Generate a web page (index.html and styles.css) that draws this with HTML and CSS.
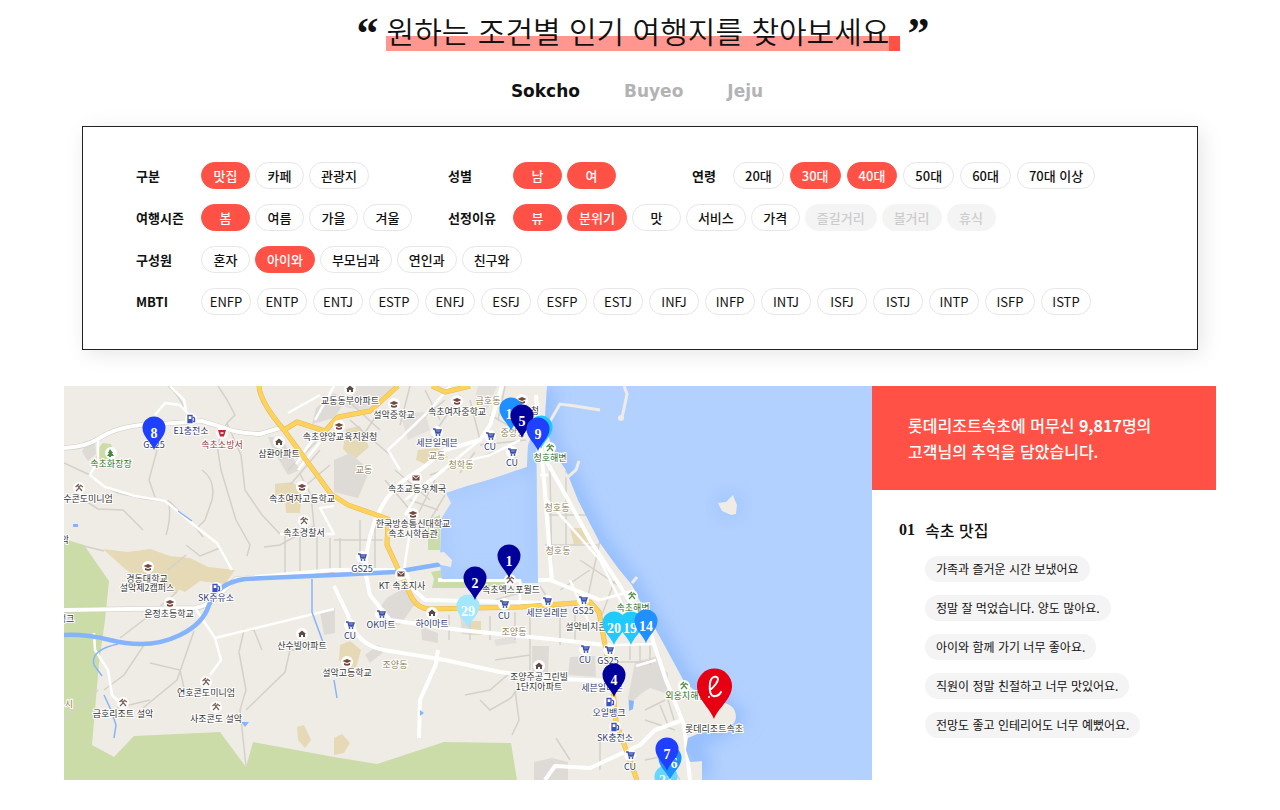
FILE: index.html
```html
<!DOCTYPE html>
<html lang="ko">
<head>
<meta charset="utf-8">
<meta name="viewport" content="width=device-width, initial-scale=1">
<title>조건별 인기 여행지</title>
<link rel="stylesheet" href="styles.css">
</head>
<body>
<main class="page">
  <header class="heading">
    <span class="quote" aria-hidden="true">“</span>
    <h1 class="title">원하는 조건별 인기 여행지를 찾아보세요</h1>
    <span class="quote" aria-hidden="true">”</span>
  </header>

  <nav class="tabs" aria-label="지역">
    <button class="tab active" type="button">Sokcho</button>
    <button class="tab" type="button">Buyeo</button>
    <button class="tab" type="button">Jeju</button>
  </nav>

  <section class="filters" aria-label="조건">
    <div class="group" role="group" aria-labelledby="f1">
      <span class="label" id="f1">구분</span>
      <div class="chips">
        <button type="button" class="chip on">맛집</button>
        <button type="button" class="chip">카페</button>
        <button type="button" class="chip">관광지</button>
      </div>
    </div>
    <div class="group" role="group" aria-labelledby="f2">
      <span class="label" id="f2">성별</span>
      <div class="chips">
        <button type="button" class="chip on">남</button>
        <button type="button" class="chip on">여</button>
      </div>
    </div>
    <div class="group compact" role="group" aria-labelledby="f3">
      <span class="label" id="f3">연령</span>
      <div class="chips">
        <button type="button" class="chip">20대</button>
        <button type="button" class="chip on">30대</button>
        <button type="button" class="chip on">40대</button>
        <button type="button" class="chip">50대</button>
        <button type="button" class="chip">60대</button>
        <button type="button" class="chip">70대 이상</button>
      </div>
    </div>
    <div class="group" role="group" aria-labelledby="f4">
      <span class="label" id="f4">여행시즌</span>
      <div class="chips">
        <button type="button" class="chip on">봄</button>
        <button type="button" class="chip">여름</button>
        <button type="button" class="chip">가을</button>
        <button type="button" class="chip">겨울</button>
      </div>
    </div>
    <div class="group wide" role="group" aria-labelledby="f5">
      <span class="label" id="f5">선정이유</span>
      <div class="chips">
        <button type="button" class="chip on">뷰</button>
        <button type="button" class="chip on">분위기</button>
        <button type="button" class="chip">맛</button>
        <button type="button" class="chip">서비스</button>
        <button type="button" class="chip">가격</button>
        <button type="button" class="chip" disabled>즐길거리</button>
        <button type="button" class="chip" disabled>볼거리</button>
        <button type="button" class="chip" disabled>휴식</button>
      </div>
    </div>
    <div class="group full" role="group" aria-labelledby="f6">
      <span class="label" id="f6">구성원</span>
      <div class="chips">
        <button type="button" class="chip">혼자</button>
        <button type="button" class="chip on">아이와</button>
        <button type="button" class="chip">부모님과</button>
        <button type="button" class="chip">연인과</button>
        <button type="button" class="chip">친구와</button>
      </div>
    </div>
    <div class="group full mbti" role="group" aria-labelledby="f7">
      <span class="label" id="f7">MBTI</span>
      <div class="chips">
        <button type="button" class="chip">ENFP</button>
        <button type="button" class="chip">ENTP</button>
        <button type="button" class="chip">ENTJ</button>
        <button type="button" class="chip">ESTP</button>
        <button type="button" class="chip">ENFJ</button>
        <button type="button" class="chip">ESFJ</button>
        <button type="button" class="chip">ESFP</button>
        <button type="button" class="chip">ESTJ</button>
        <button type="button" class="chip">INFJ</button>
        <button type="button" class="chip">INFP</button>
        <button type="button" class="chip">INTJ</button>
        <button type="button" class="chip">ISFJ</button>
        <button type="button" class="chip">ISTJ</button>
        <button type="button" class="chip">INTP</button>
        <button type="button" class="chip">ISFP</button>
        <button type="button" class="chip">ISTP</button>
      </div>
    </div>
  </section>

  <section class="result">
    <svg class="map" viewBox="64 386 808 394" preserveAspectRatio="xMidYMid slice" role="img" aria-label="속초 지도">
      <defs>
        <filter id="soft" x="-20%" y="-20%" width="140%" height="140%"><feGaussianBlur stdDeviation="9"/></filter>
        <path id="pin" d="M0 0C-2 -7-11.500-13-11.500-22A11.500 11.500 0 1 1 11.500-22C11.500-13 2-7 0 0Z"/>
        <g id="cart"><circle r="6" fill="#fff"/><path d="M-4-3h2l1 4h4l1-3h-5.500M-1 0h4" fill="none" stroke="#3c50a8" stroke-width="1.400"/><circle cx="-.5" cy="3" r=".9" fill="#3c50a8"/><circle cx="2.500" cy="3" r=".9" fill="#3c50a8"/></g>
        <g id="school"><circle r="6" fill="#fff"/><path d="M-4.500-1 0-3l4.500 2L0 1ZM-3 1v2q3 1.500 6 0V1L0 2Z" fill="#73483f"/></g>
        <g id="fuel"><circle r="6" fill="#fff"/><path d="M-3-3.500h4v7h-4ZM2-2l1.500 1v3.500H2" fill="none" stroke="#3c50c0" stroke-width="1.300"/><path d="M-3 0h4v3.500h-4Z" fill="#3c50c0"/></g>
        <g id="home"><circle r="6" fill="#fff"/><path d="M-4 0 0-3.500 4 0H3v3H1V1H-1v2H-3V0Z" fill="#5d4a42"/></g>
        <g id="resort"><circle r="6" fill="#fff"/><path d="M-3.500-1 0-4M-2-3 3 3M0 0-3 3M1-3l3 2M2-3 0-1" fill="none" stroke="#7a6156" stroke-width="1.200"/></g>
        <g id="beach"><circle r="6" fill="#fff"/><path d="M-3.500-1 0-4M-2-3 3 3M0 0-3 3M1-3l3 2M2-3 0-1" fill="none" stroke="#579246" stroke-width="1.200"/></g>
        <g id="tree"><circle r="6" fill="#fff"/><path d="M-1-4 2 0H1l2 3H0v1H-2V3H-4l2-3H-3Z" fill="#3f8f36"/></g>
        <g id="mail"><circle r="6" fill="#fff"/><path d="M-3.500-2.500h7v5h-7Z" fill="#73483f"/><path d="M-3-2 0 .5 3-2" fill="none" stroke="#fff"/></g>
        <g id="siren"><circle r="6" fill="#fff"/><path d="M-4-3 4-3 2 3.500H-2Z" fill="#c8232c"/><path d="M-1.500 0h3" stroke="#fff" stroke-width="1.500"/></g>
      </defs>

      <rect x="64" y="386" width="808" height="394" fill="#efece6"/>

      <g fill="#cbdca9">
        <path d="M64 539 84 545 109 581 105 620 99 663 92 745 114 757 134 736 220 732 246 767 253 742 334 757 377 764 444 742 511 743 517 780H64Z"/>
        <path d="M98 448 103 443 111 444 115 455 103 463 96 458ZM428 520 440 515 440 550 428 550ZM434 579 505 579 505 588 432 588ZM431 572 442 570 442 579 434 579Z"/>
      </g>
      <g fill="#e6d9b6">
        <path d="M103 549 128 552 150 549 170 556 190 558 208 567 235 570 225 584 200 581 185 592 165 583 140 580 124 568Z"/>
        <path d="M275 484 292 482 302 490 300 513 286 513 285 500 275 496ZM346 429 360 426 369 447 354 460 343 449ZM418 450 438 448 448 457 425 464 416 460ZM340 645 350 641 361 650 356 668 345 668 339 660ZM471 621 481 621 481 635 471 635ZM570 528 586 528 590 542 574 545ZM334 738 342 734 350 743 344 753 334 755ZM297 727 304 725 311 740 305 748 298 740ZM158 578 184 585 175 594Z"/>
      </g>
      <g fill="#dedbd7">
        <path d="M316 408 334 393 346 400 334 418 312 424ZM334 460 350 453 370 470 358 498 334 492ZM375 613 388 597 404 588 415 604 400 625 386 622ZM365 655 378 645 386 650 370 663ZM421 627 438 633 438 643 422 640ZM532 646 549 646 548 677 532 677ZM570 657 595 656 596 677 568 675ZM634 673 654 661 668 673 668 694 650 688 636 697ZM84 447 95 441 96 454 88 461 82 452ZM268 437 281 437 300 470 288 475 273 450ZM320 612 335 608 335 633 324 635ZM460 615 471 613 471 635 462 634ZM534 762 552 758 568 762 568 780 534 780ZM635 662 661 655 660 676 628 706 628 698Z"/>
        <path d="M350 386 395 386 365 411 345 407ZM400 414 425 412 430 430 408 440ZM478 386 497 386 487 410 474 402ZM494 640 513 636 517 643 496 646Z" opacity=".7"/>
      </g>

      <g fill="none" stroke="#d5d0ca" stroke-width="1.500">
        <path d="M168 386Q180 396 184 409M218 386Q228 400 235 415L227 423 217 445 221 470 236 520 250 545 247 556M227 423 241 455 245 490 262 515 280 534M202 470Q216 480 212 500L205 520 198 527M157 450 149 480 155 497M64 463 90 475 105 487 118 493 145 499 170 502 184 516 194 525 203 537M76 495 98 509 123 510 143 530M168 500Q172 515 166 535M186 545 200 556 220 548M300 474 311 495 314 526 280 545 264 547M168 570 186 555M84 546 104 551M177 592 150 615 137 625 120 638M144 645 124 675 104 690M194 631 177 680 143 708M150 663 180 670 185 692M239 652 246 690 240 710 246 766M239 652 244 630 254 630 262 650M246 710 285 672 290 650 300 650M465 695 490 690 511 672M480 700 490 710 511 698 520 685M515 690 519 720 512 735M64 720 98 690M117 708 150 700"/>
        <path d="M285 535V573M300 530V572M317 535V571M330 538V570M340 538V570M360 520V570M375 520V572M334 540 383 540M345 398 380 430M350 420 390 455M380 410 360 440M410 386 400 425M425 390 440 420M445 400 400 437M460 395 430 440M470 400 480 440M430 475 500 450M410 500 438 510M435 480 415 520M445 495 424 530M395 470 430 500M385 480 410 510M480 445 526 440M490 415 525 435M505 386 498 420M515 450 516 468M460 473 475 452M280 460 297 448M290 485 320 450M288 470 316 442M305 486 330 465"/>
        <path d="M449 615V640M470 613V640M490 616V640M515 612V640M530 608V645M560 606V645M575 605V640M495 660 530 655M530 645V670M495 600 530 590M560 590 590 570M540 586 555 610M550 470 552 580M566 470 566 550M545 515 590 515M545 545 598 545M580 560 625 590M600 540 585 610M615 580 600 620M630 645V660M640 645V662M650 645V665M608 662 646 662M645 710 665 700M660 705 668 725M668 700 674 720M645 720 675 730M556 738 570 760M600 740 600 770M645 760 665 756 680 780"/>
      </g>
      <path d="M64 448Q85 447 98 439 120 424 160 424L202 421 225 428Q235 433 260 434L280 428M64 610 195 608Q210 606 222 592L236 579 334 573" fill="none" stroke="#d0cbc3" stroke-width="5"/>
      <g fill="none" stroke="#fff" stroke-linejoin="round">
        <g stroke-width="4">
          <path d="M64 448Q85 447 98 439 120 424 160 424L202 421 225 428Q235 433 260 434L280 428M64 610 195 608Q210 606 222 592L236 579 334 570 395 570"/>
          <path d="M502 386 490 425 480 440 445 450 420 470Q370 495 365 570L370 595 390 620 460 630 560 640 615 646M334 586 348 615Q356 645 384 650L445 660 500 672 560 679 612 681"/>
          <path d="M536 395 544 480 552 582M540 450 560 485 590 540 650 632 666 680 684 725 690 780M438 580H550L575 590 600 600"/>
          <path d="M438 650 436 664 420 700 419 738M545 780 555 766 590 768 640 745 655 730 683 720M405 570 412 588 425 600 550 603"/>
        </g>
        <g stroke-width="2.500">
          <path d="M98 440 98 460 90 475 105 487 135 496 165 501 180 513 200 530 217 543 232 570M155 415 165 403 180 405 195 421M170 386 184 400 186 410M195 608 215 638 221 660 210 675M215 638 334 609M94 633 95 650 108 670 112 695 120 703M280 534H334L320 508 334 506M288 413 320 395M315 436 296 464M320 442 298 470M334 386 315 420M520 440 490 455 450 465 420 490 405 515M480 440 405 500M400 470 388 450 430 410 450 386M540 475 548 475M547 500 600 560 625 610M600 600 635 590M615 645 655 644M636 666 656 660M605 640 608 660M520 580V605M570 580 590 625M412 520 407 550 404 570"/>
        </g>
      </g>

      <g fill="none" stroke-linejoin="round">
        <path d="M259 386Q260 402 284 430L331 494 348 505 388 519 387 545 400 573 412 598Q418 609 430 609L520 607 590 602 599 612 606 650 613 690 616 722 637 780M284 430 297 422 325 431 338 417 370 411 398 386M432 386 445 392 470 386" stroke="#dfb75e" stroke-width="5"/>
        <path d="M259 386Q260 402 284 430L331 494 348 505 388 519 387 545 400 573 412 598Q418 609 430 609L520 607 590 602 599 612 606 650 613 690 616 722 637 780M284 430 297 422 325 431 338 417 370 411 398 386M432 386 445 392 470 386" stroke="#ffd35b" stroke-width="4"/>
      </g>

      <g fill="none" stroke="#86b4fb">
        <path d="M64 635Q85 634 110 640 150 650 180 635 203 624 209 605 217 583 245 579L334 575 395 572 442 564" stroke-width="4.500"/>
        <path d="M118 644Q90 650 94 665L102 676M104 695 111 710 116 725 114 738M178 511 192 521M312 579V612L324 645M334 680 337 698" stroke-width="1.500"/>
      </g>
      <path d="M73 524h5v3h-5ZM241 722h8l-4 5ZM420 710l4 3-4 3ZM629 700l5 1-1 8-4 2Z" fill="#86b4fb"/>

      <clipPath id="sea"><path d="M547 386 545 418 552 450 566 470 578 500 600 543 618 568 632 585 642 605 660 637 685 683 697 692 720 702Q736 704 736 717 735 728 720 731L700 733 688 738 686 750 690 762 702 761 702 780H872V386ZM446 493 467 486 488 480 527 467 528 445 536 425 538 583 522 583 521 579H442L440 564 441 519 451 503Z"/></clipPath>
      <g clip-path="url(#sea)">
        <rect x="400" y="386" width="472" height="394" fill="#b3d1ff"/>
        <path d="M547 386 545 418 552 450 566 470 578 500 600 543 618 568 632 585 642 605 660 637 685 683 720 702 736 717 720 731 688 738 686 750 702 761 702 780" fill="none" stroke="#8fbafc" stroke-width="16" filter="url(#soft)"/>
        <path d="M446 493 527 467 528 445M537 425V583M521 579H442L440 519" fill="none" stroke="#9cc2fc" stroke-width="8" filter="url(#soft)"/>
        <circle cx="729" cy="506" r="16" fill="#a3c7fd" filter="url(#soft)"/>
      </g>
      <g fill="#efece6">
        <path d="M718 503 726 502 730 498 733 495 734 498 737 505 736 514 731 515 722 511Z"/>
        <path d="M435 553 444 552 452 560 451 567 441 565 435 560Z"/>
      </g>
      <path d="M545 430 560 404 575 406 600 410M550 460 568 477 576 470 579 461M624 386 627 394 622 418M632 583 637 577" fill="none" stroke="#efece6" stroke-width="3"/>
      <circle cx="621" cy="418" r="3" fill="#efece6"/>

      <use href="#fuel" x="191" y="419"/><use href="#siren" x="222" y="433"/><use href="#tree" x="111" y="453"/>
      <use href="#home" x="279" y="442"/><use href="#school" x="302" y="487"/><use href="#resort" x="304" y="521"/>
      <use href="#resort" x="79" y="488"/><use href="#school" x="148" y="567"/><use href="#fuel" x="216" y="588"/>
      <use href="#school" x="170" y="603"/><use href="#home" x="302" y="634"/><use href="#resort" x="206" y="682"/>
      <use href="#resort" x="123" y="703"/><use href="#resort" x="216" y="707"/><use href="#home" x="350" y="389"/>
      <use href="#school" x="394" y="404"/><use href="#school" x="457" y="401"/><use href="#school" x="339" y="426"/>
      <use href="#cart" x="437" y="432"/><use href="#cart" x="490" y="436"/><use href="#cart" x="512" y="452"/>
      <use href="#school" x="522" y="400"/><use href="#beach" x="550" y="448"/><use href="#mail" x="416" y="478"/>
      <use href="#school" x="413" y="514"/><use href="#cart" x="362" y="557"/><use href="#mail" x="401" y="574"/>
      <use href="#resort" x="510" y="580"/><use href="#cart" x="381" y="614"/><use href="#cart" x="350" y="625"/>
      <use href="#home" x="432" y="613"/><use href="#cart" x="504" y="604"/><use href="#cart" x="547" y="601"/>
      <use href="#cart" x="583" y="600"/><use href="#cart" x="585" y="649"/><use href="#school" x="347" y="662"/>
      <use href="#home" x="539" y="666"/><use href="#beach" x="632" y="596"/><use href="#beach" x="684" y="686"/>
      <use href="#cart" x="609" y="650"/><use href="#fuel" x="610" y="702"/><use href="#fuel" x="615" y="727"/><use href="#cart" x="630" y="755"/>

      <g class="place" transform="translate(0 3)">
        <text x="279" y="454">삼환아파트</text><text x="302" y="499">속초여자고등학교</text><text x="88" y="499">수콘도미니엄</text>
        <text x="304" y="533">속초경찰서</text><text x="147" y="579">경동대학교</text><text x="147" y="588">설악제2캠퍼스</text>
        <text x="169" y="614">온정초등학교</text><text x="302" y="646">산수빌아파트</text><text x="206" y="693">연호콘도미니엄</text>
        <text x="123" y="714">금호리조트 설악</text><text x="216" y="719">사조콘도 설악</text><text x="65" y="540">악</text>
        <text x="350" y="401">교동동부아파트</text><text x="394" y="415">설악중학교</text><text x="457" y="412">속초여자중학교</text>
        <text x="340" y="437">속초양양교육지원청</text><text x="417" y="489">속초교동우체국</text><text x="413" y="524">한국방송통신대학교</text>
        <text x="413" y="534">속초시학습관</text><text x="402" y="586">KT 속초지사</text><text x="511" y="590">속초엑스포월드</text>
        <text x="590" y="627">설악비치콘도</text><text x="347" y="673">설악고등학교</text><text x="539" y="677">조양주공그린빌</text>
        <text x="539" y="687">1단지아파트</text><text x="535" y="411">청</text><text x="714" y="729">롯데리조트속초</text>
      </g>
      <g class="place shop" transform="translate(0 3)">
        <text x="191" y="431">E1충전소</text><text x="154" y="445">GS25</text><text x="216" y="598">SK주유소</text><text x="66" y="619">뱅크</text>
        <text x="437" y="443">세븐일레븐</text><text x="490" y="447">CU</text><text x="512" y="463">CU</text><text x="362" y="569">GS25</text>
        <text x="504" y="616">CU</text><text x="547" y="613">세븐일레븐</text><text x="583" y="611">GS25</text><text x="432" y="624">하이마트</text>
        <text x="381" y="625">OK마트</text><text x="350" y="636">CU</text><text x="585" y="660">CU</text><text x="608" y="661">GS25</text>
        <text x="602" y="688">세븐일레븐</text><text x="609" y="713">오일뱅크</text><text x="615" y="738">SK충전소</text><text x="630" y="767">CU</text>
      </g>
      <g class="place nature" transform="translate(0 3)">
        <text x="111" y="464">속초화장장</text><text x="550" y="458">청호해변</text><text x="633" y="608">속초해변</text><text x="686" y="696">외옹치해변</text>
      </g>
      <g class="place area" transform="translate(0 3)">
        <text x="488" y="401">금호동</text><text x="437" y="456">교동</text><text x="461" y="465">청학동</text><text x="364" y="470">교동</text>
        <text x="557" y="508">청호동</text><text x="558" y="551">청호동</text><text x="514" y="632">조양동</text><text x="395" y="665">조양동</text>
        <text x="513" y="433">중앙동</text><text x="69" y="704">시</text>
      </g>
      <g class="place fire" transform="translate(0 3)"><text x="222" y="445">속초소방서</text></g>

      <g class="pins">
        <g transform="translate(154 450)"><use href="#pin" fill="#1f41ff"/><text y="-12">8</text></g>
        <g transform="translate(511 431)"><use href="#pin" fill="#1e90ff"/><text x="-2" y="-12">1</text></g>
        <g transform="translate(522 438)"><use href="#pin" fill="#00009b"/><text y="-12">5</text></g>
        <g transform="translate(541 449)"><use href="#pin" fill="#1fc7ff"/></g>
        <g transform="translate(538 451)"><use href="#pin" fill="#1f41ff"/><text y="-12">9</text></g>
        <g transform="translate(509 578)"><use href="#pin" fill="#00009b"/><text y="-12">1</text></g>
        <g transform="translate(468 628)"><use href="#pin" fill="#a3e6ff"/><text y="-12">29</text></g>
        <g transform="translate(475 600)"><use href="#pin" fill="#00009b"/><text y="-12">2</text></g>
        <g transform="translate(631 645)"><use href="#pin" fill="#20caff"/><text x="-1" y="-12">19</text></g>
        <g transform="translate(614 645)"><use href="#pin" fill="#20caff"/><text y="-12">20</text></g>
        <g transform="translate(646 643)"><use href="#pin" fill="#1e90ff"/><text y="-12">14</text></g>
        <g transform="translate(614 697)"><use href="#pin" fill="#00009b"/><text y="-12">4</text></g>
        <g transform="translate(666 799)"><use href="#pin" fill="#66d7ff"/><text y="-14">21</text></g>
        <g transform="translate(670 780)"><use href="#pin" fill="#1e90ff"/><text x="4" y="-12">6</text></g>
        <g transform="translate(667 771)"><use href="#pin" fill="#1f41ff"/><text y="-12">7</text></g>
      </g>
      <path d="M714 719C710 708 697 699 697 686A17.500 17.500 0 1 1 732 686C732 699 718 708 714 719Z" fill="#e60012"/>
      <path d="M710 690C714 687 718 682 718 679 717 675 711 676 710 683 709 692 711 697 715 696 718 696 720 694 721 692" fill="none" stroke="#fff" stroke-width="2" stroke-linecap="round"/>
      <circle cx="709" cy="697" r="1" fill="#fff"/>
    </svg>

    <aside class="side">
      <p class="banner">롯데리조트속초에 머무신 <strong>9,817</strong>명의<br>고객님의 추억을 담았습니다.</p>
      <div class="reviews">
        <h2 class="spot"><span class="rank">01</span>속초 맛집</h2>
        <ul class="comments">
          <li>가족과 즐거운 시간 보냈어요</li>
          <li>정말 잘 먹었습니다. 양도 많아요.</li>
          <li>아이와 함께 가기 너무 좋아요.</li>
          <li>직원이 정말 친절하고 너무 맛있어요.</li>
          <li>전망도 좋고 인테리어도 너무 예뻤어요.</li>
        </ul>
      </div>
    </aside>
  </section>
</main>
</body>
</html>
```

FILE: styles.css
```css
* { box-sizing: border-box; }

body {
  margin: 0;
  background: #fff;
  color: #111;
  font-family: "Noto Sans CJK KR", sans-serif;
  font-size: 13px;
}

button {
  font: inherit;
  color: inherit;
  cursor: pointer;
}

.page { padding: 8px 64px 30px; }

.heading {
  display: flex;
  justify-content: center;
  gap: 7px;
  height: 48px;
  padding-left: 6px;
}

.title {
  margin: 0;
  height: 43px;
  padding: 0 11px 0 1px;
  font-size: 30px;
  font-weight: 350;
  line-height: 44px;
  background:
    linear-gradient(#ff5146, #ff5146) right bottom / 11px 15px no-repeat,
    linear-gradient(#ff968f, #ff968f) left bottom / 100% 15px no-repeat;
}

.quote {
  font-family: "Liberation Serif", serif;
  font-size: 44px;
  font-weight: 700;
  line-height: 52px;
}

.tabs {
  display: flex;
  justify-content: center;
  gap: 44px;
  padding: 21px 6px 0 0;
}

.tab {
  padding: 0;
  border: 0;
  background: none;
  color: #b3b3b3;
  font-family: "DejaVu Sans", sans-serif;
  font-size: 17px;
  font-weight: 700;
  line-height: 28px;
}

.tab.active { color: #111; }

.filters {
  display: grid;
  grid-template-columns: 312px 244px 1fr;
  row-gap: 15px;
  margin: 21px 18px 36px;
  padding: 35px 20px 34px 53px;
  border: 1px solid #222;
  background: #fff;
  box-shadow: 4px 4px 20px rgba(0, 0, 0, 0.1);
}

.group {
  display: flex;
  align-items: center;
}

.wide { grid-column: span 2; }
.full { grid-column: 1 / -1; }

.label {
  flex: 0 0 65px;
  font-weight: 700;
}

.compact .label { flex-basis: 41px; }

.chips {
  display: flex;
  flex-wrap: wrap;
  gap: 5px;
}

.chip {
  min-width: 49px;
  height: 27px;
  padding: 0 11px;
  border: 1px solid #e6e6e6;
  border-radius: 14px;
  background: #fff;
  font-weight: 500;
  line-height: 24px;
  white-space: nowrap;
}

.mbti .chips,
.compact .chips { gap: 6px; }

.mbti .chip {
  min-width: 50px;
  padding: 0 7px;
  font-weight: 400;
}

.chip.on {
  border-color: #ff5146;
  background: #ff5146;
  color: #fff;
}

.chip:disabled {
  border-color: #f4f4f4;
  background: #f4f4f4;
  color: #ccc;
  cursor: default;
}

.result {
  display: grid;
  grid-template-columns: 101fr 43fr;
}

.map {
  display: block;
  width: 100%;
  height: 100%;
}

.place {
  font-size: 9px;
  fill: #333;
  stroke: #fff;
  stroke-width: 2px;
  paint-order: stroke;
  text-anchor: middle;
}

.shop { fill: #2f3a70; }
.nature { fill: #2f7228; }
.area { fill: #8f8058; }
.fire { fill: #8f3b3b; }

.pins {
  fill: #fff;
  font-family: "Liberation Serif", serif;
  font-size: 14px;
  font-weight: 700;
  text-anchor: middle;
}

.banner {
  margin: 0;
  padding: 26px 36px;
  background: #ff5146;
  color: #fff;
  font-size: 16px;
  font-weight: 500;
  line-height: 26px;
}

.reviews { padding: 27px 20px 0 27px; }

.spot {
  display: flex;
  align-items: center;
  margin: 0;
  font-size: 16px;
  font-weight: 500;
  line-height: 26px;
}

.rank {
  width: 26px;
  font-family: "Liberation Serif", serif;
  font-weight: 700;
}

.comments {
  display: flex;
  flex-direction: column;
  align-items: flex-start;
  gap: 13px;
  margin: 13px 0 0 26px;
  padding: 0;
  list-style: none;
}

.comments li {
  padding: 0 11px;
  border-radius: 13px;
  background: #f4f4f4;
  font-size: 12px;
  line-height: 26px;
}
```
